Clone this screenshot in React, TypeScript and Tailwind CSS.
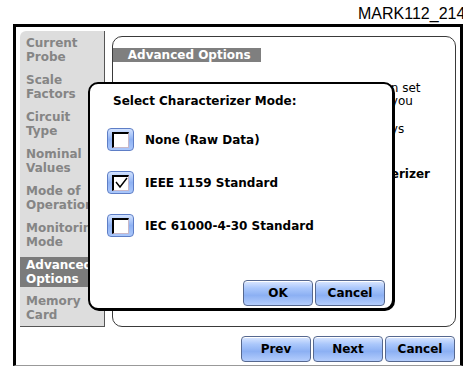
import React from "react";

const items: { l: [string, string]; active?: boolean }[] = [
  { l: ["Current", "Probe"] },
  { l: ["Scale", "Factors"] },
  { l: ["Circuit", "Type"] },
  { l: ["Nominal", "Values"] },
  { l: ["Mode of", "Operation"] },
  { l: ["Monitoring", "Mode"] },
  { l: ["Advanced", "Options"], active: true },
  { l: ["Memory", "Card"] },
];

function Btn({ children }: { children: React.ReactNode }) {
  return (
    <div className="w-[70px] h-[26px] rounded-[4px] border border-[#56688f] bg-[linear-gradient(to_bottom,#dce8ff_0%,#aac7fb_30%,#8cb0f3_60%,#b4cdfc_100%)] shadow-[inset_0_1px_0_#ffffff] flex items-center justify-center text-[12px] font-bold text-black">
      {children}
    </div>
  );
}

function Check({ checked }: { checked?: boolean }) {
  return (
    <div className="w-[27px] h-[23px] rounded-[4px] border border-[#5e7ec6] bg-[linear-gradient(to_bottom,#d3e3ff,#8fb2f3_50%,#aac7fb)] flex items-center justify-center shrink-0">
      <div className="w-[17px] h-[16px] bg-white border-t-2 border-l-2 border-t-black border-l-black border-r border-b border-r-[#c8b8c8] border-b-[#c8b8c8] flex items-center justify-center">
        {checked && (
          <svg width="13" height="12" viewBox="0 0 13 12">
            <polyline points="1,5 5,10 12,1" fill="none" stroke="#000" strokeWidth="1.4" />
          </svg>
        )}
      </div>
    </div>
  );
}

export default function App() {
  return (
    <div className="relative w-[463px] h-[366px] bg-white overflow-hidden font-['DejaVu_Sans',sans-serif]">
      <div className="h-[24px] pl-[358px] pt-[6px] whitespace-nowrap font-['Liberation_Sans',Arial,sans-serif] text-[16px] leading-[16px] text-black">
        MARK112_214
      </div>
      <div className="ml-[13px] h-[342px] border-t-[3px] border-l-[3px] border-r-[3px] border-black border-b border-b-[#999999] flex flex-col">
        <div className="flex pt-[4px] pl-[4px] pr-[4px]">
          <div className="w-[85px] h-[296px] bg-[#dddddd] rounded-tl-[6px] border-r border-b border-[#555555] pt-[5px] text-[12px] font-bold leading-[14px] text-[#858585]">
            {items.map((it, i) => (
              <div key={i} className="h-[37px]">
                <div className={it.active ? "bg-[#7b7b7b] text-white pl-[6px] -mt-[1px] py-[1px]" : "pl-[6px]"}>
                  <div className="whitespace-nowrap">{it.l[0]}</div>
                  <div className="whitespace-nowrap">{it.l[1]}</div>
                </div>
              </div>
            ))}
          </div>
          <div className="ml-[7px] mt-[5px] w-[345px] h-[291px] border border-[#3a3a3a] rounded-[10px] pt-[11px]">
            <div className="w-[148px] h-[14px] bg-[#7f7f7f] text-white text-[12px] font-bold leading-[14px] pl-[15px] whitespace-nowrap">
              Advanced Options
            </div>
            <div className="pl-[278px] pt-[20px] text-[12px] leading-[13px] text-black whitespace-nowrap">
              <div>n set</div>
              <div>you</div>
              <div className="mt-[15px]">ys</div>
              <div className="mt-[32px] font-bold">erizer</div>
            </div>
          </div>
        </div>
        <div className="flex justify-end gap-[2px] pr-[5px] mt-[9px]">
          <Btn>Prev</Btn>
          <Btn>Next</Btn>
          <Btn>Cancel</Btn>
        </div>
      </div>

      <div className="absolute left-[88px] top-[82px] w-[306px] h-[228px] bg-white border-2 border-black rounded-[10px] shadow-[1px_1px_0_#000000] flex flex-col">
        <div className="pl-[23px] pt-[10px] text-[12px] font-bold leading-[14px] text-black whitespace-nowrap">
          Select Characterizer Mode:
        </div>
        <div className="flex flex-col gap-[20px] pl-[17px] mt-[20px] text-[12px] font-bold text-black">
          {[
            ["None (Raw Data)", false],
            ["IEEE 1159 Standard", true],
            ["IEC 61000-4-30 Standard", false],
          ].map(([t, c], i) => (
            <div key={i} className="flex items-center gap-[11px] h-[23px]">
              <Check checked={c as boolean} />
              <span className="whitespace-nowrap">{t as string}</span>
            </div>
          ))}
        </div>
        <div className="flex gap-[2px] pl-[153px] mt-auto mb-[2px]">
          <Btn>OK</Btn>
          <Btn>Cancel</Btn>
        </div>
      </div>
    </div>
  );
}
